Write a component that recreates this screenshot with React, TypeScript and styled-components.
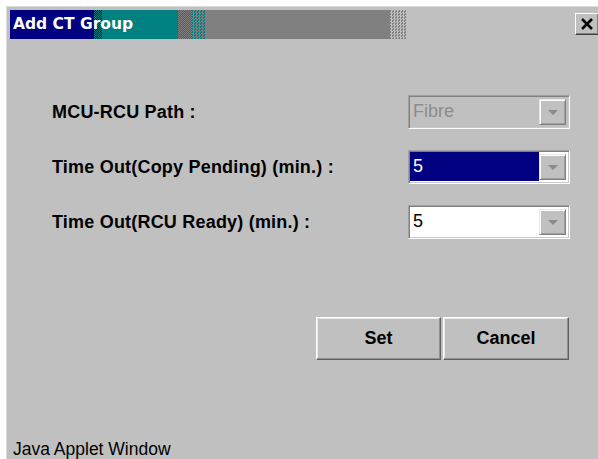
import React from "react";
import styled, { createGlobalStyle } from "styled-components";

const GlobalStyle = createGlobalStyle`
  html, body {
    margin: 0;
    padding: 0;
    background: #ffffff;
    overflow: hidden;
  }
  body {
    font-family: "Liberation Sans", Arial, sans-serif;
  }
`;

const Frame = styled.div`
  margin: 6px 0 0 6px;
  width: 600px;
  height: 453px;
  box-sizing: border-box;
  background: #c0c0c0;
  border-top: 1px solid #dcdcdc;
  border-left: 1px solid #dcdcdc;
  padding: 3px 0 0 3px;
  display: flex;
  flex-direction: column;
`;

const TitleBar = styled.div`
  position: relative;
  height: 29px;
  display: flex;
  align-items: center;
`;

// a plain colour band, or a dithered blend of two colours
const Band = styled.div<{ $w?: number; $c: string; $d?: string; $grain?: number }>`
  height: 100%;
  ${(p) => (p.$w ? `width: ${p.$w}px; flex: none;` : "flex: 1;")}
  background: ${(p) =>
    p.$d
      ? `repeating-conic-gradient(${p.$c} 0 25%, ${p.$d} 0 50%) 0 0 / ${p.$grain ?? 2}px ${p.$grain ?? 2}px`
      : p.$c};
`;

const Caption = styled.span`
  position: absolute;
  left: 3px;
  top: 0;
  line-height: 29px;
  font-family: "DejaVu Sans", Tahoma, sans-serif;
  font-weight: bold;
  font-size: 15.5px;
  color: #ffffff;
`;

const CloseButton = styled.div`
  position: absolute;
  left: 565px;
  top: 3px;
  width: 24px;
  height: 22px;
  box-sizing: border-box;
  background: #c0c0c0;
  border-top: 1px solid #ffffff;
  border-left: 1px solid #ffffff;
  border-right: 1px solid #404040;
  border-bottom: 1px solid #404040;
  box-shadow: inset -1px -1px #808080;
  display: flex;
  align-items: center;
  justify-content: center;
`;

const Form = styled.div`
  margin-top: 56px;
  padding-left: 42px;
  display: grid;
  grid-template-columns: 356px 162px;
  row-gap: 21px;
  align-items: center;
`;

const Label = styled.span`
  font-weight: bold;
  font-size: 18px;
  letter-spacing: 0.2px;
  color: #000000;
`;

const Choice = styled.div<{ $disabled?: boolean }>`
  height: 34px;
  box-sizing: border-box;
  border-top: 1px solid #a0a0a0;
  border-left: 1px solid #a0a0a0;
  border-right: 1px solid #ffffff;
  border-bottom: 1px solid #ffffff;
  box-shadow: inset 1px 1px #808080, inset -1px -1px #c8c8c8;
  padding: 1px 3px 2px 1px;
  display: flex;
  background: ${(p) => (p.$disabled ? "#c0c0c0" : "#ffffff")};
`;

const ChoiceValue = styled.div<{ $selected?: boolean; $disabled?: boolean }>`
  flex: 1;
  display: flex;
  align-items: center;
  padding-left: 3px;
  font-size: 18px;
  background: ${(p) => (p.$selected ? "#000080" : "transparent")};
  color: ${(p) => (p.$disabled ? "#8c8c8c" : p.$selected ? "#ffffff" : "#000000")};
`;

const ArrowButton = styled.div`
  width: 27px;
  margin: 2px 0 1px 0;
  box-sizing: border-box;
  background: #c0c0c0;
  border-top: 1px solid #e8e8e8;
  border-left: 1px solid #e8e8e8;
  border-right: 1px solid #808080;
  border-bottom: 1px solid #808080;
  box-shadow: inset 1px 1px #ffffff, inset -1px -1px #a0a0a0;
  display: flex;
  align-items: center;
  justify-content: center;

  &::after {
    content: "";
    width: 0;
    height: 0;
    border-left: 5px solid transparent;
    border-right: 5px solid transparent;
    border-top: 5px solid #8a8a8a;
  }
`;

const Buttons = styled.div`
  margin-top: 78px;
  width: 559px;
  display: flex;
  justify-content: flex-end;
  gap: 2px;
`;

const PushButton = styled.button<{ $w: number }>`
  width: ${(p) => p.$w}px;
  height: 43px;
  box-sizing: border-box;
  background: #c0c0c0;
  border-top: 1px solid #ffffff;
  border-left: 1px solid #ffffff;
  border-right: 1px solid #606060;
  border-bottom: 1px solid #606060;
  box-shadow: inset -1px -1px #909090, inset 1px 1px #e8e8e8;
  font-family: "Liberation Sans", Arial, sans-serif;
  font-weight: bold;
  font-size: 18px;
  color: #000000;
  padding: 0;
`;

const Status = styled.div`
  margin-top: auto;
  padding: 0 0 0 3px;
  font-size: 17.5px;
  line-height: 20px;
  color: #000000;
`;

const rows = [
  { label: "MCU-RCU Path :", value: "Fibre", disabled: true },
  { label: "Time Out(Copy Pending) (min.) :", value: "5", selected: true },
  { label: "Time Out(RCU Ready) (min.) :", value: "5" },
];

export default function App() {
  return (
    <>
      <GlobalStyle />
      <Frame>
        <TitleBar>
          <Band $w={84} $c="#000080" />
          <Band $w={8} $c="#000080" $d="#008080" />
          <Band $w={76} $c="#008080" />
          <Band $w={14} $c="#008080" $d="#808080" />
          <Band $w={13} $c="#808080" $d="#008080" $grain={3} />
          <Band $w={185} $c="#808080" />
          <Band $w={17} $c="#c0c0c0" $d="#808080" $grain={3} />
          <Band $c="#c0c0c0" />
          <Caption>Add CT Group</Caption>
          <CloseButton>
            <svg width="14" height="12" viewBox="0 0 14 12">
              <path d="M2 1 L12 11 M12 1 L2 11" stroke="#000" strokeWidth="2.6" />
            </svg>
          </CloseButton>
        </TitleBar>

        <Form>
          {rows.map((r) => (
            <React.Fragment key={r.label}>
              <Label>{r.label}</Label>
              <Choice $disabled={r.disabled}>
                <ChoiceValue $selected={r.selected} $disabled={r.disabled}>
                  {r.value}
                </ChoiceValue>
                <ArrowButton />
              </Choice>
            </React.Fragment>
          ))}
        </Form>

        <Buttons>
          <PushButton $w={125}>Set</PushButton>
          <PushButton $w={126}>Cancel</PushButton>
        </Buttons>

        <Status>Java Applet Window</Status>
      </Frame>
    </>
  );
}
